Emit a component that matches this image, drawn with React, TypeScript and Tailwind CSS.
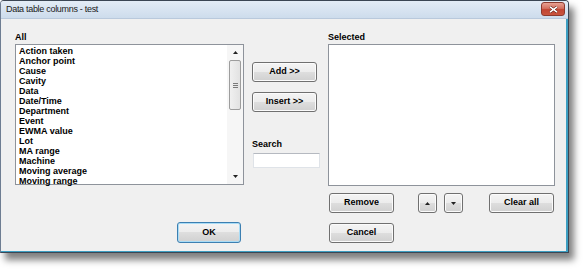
import React from "react"

const ITEMS = [
  "Action taken",
  "Anchor point",
  "Cause",
  "Cavity",
  "Data",
  "Date/Time",
  "Department",
  "Event",
  "EWMA value",
  "Lot",
  "MA range",
  "Machine",
  "Moving average",
  "Moving range",
]

const BTN =
  "flex items-center justify-center rounded-[3px] border text-[9px] font-bold text-black bg-[linear-gradient(#f4f4f4_0%,#ececec_50%,#dedede_50%,#d0d0d0_100%)]"

function Button({ children, className = "" }: { children: React.ReactNode; className?: string }) {
  return (
    <button className={`${BTN} border-[#707070] shadow-[inset_0_0_0_1px_#fbfbfb] ${className}`}>
      {children}
    </button>
  )
}

function Tri({ up }: { up?: boolean }) {
  return (
    <svg width="5" height="3" viewBox="0 0 5 3">
      <path d={up ? "M0 3L2.5 0L5 3Z" : "M0 0L5 0L2.5 3Z"} fill="#222" />
    </svg>
  )
}

export default function App() {
  return (
    <div className="w-[584px] h-[270px] bg-white font-['Liberation_Sans',Arial,sans-serif]">
      <div className="w-[569px] h-[253px] flex flex-col border border-[#3b4654] border-l-[#6e7d92] rounded-t-[4px] shadow-[5px_7px_7px_rgba(0,0,0,0.5)] overflow-hidden">
        {/* Title bar */}
        <div className="h-[18px] shrink-0 flex items-center justify-between pl-[5px] pr-[3px] bg-[linear-gradient(#e3ecf6,#cddcec)] border-b border-[#b9c9dc]">
          <span className="text-[9px] tracking-[-0.3px] text-[#1a1a1a] leading-none">Data table columns - test</span>
          <div className="w-[24px] h-[14px] -mt-[1px] rounded-[3px] border border-[#8c3a2e] bg-[linear-gradient(#e8a193_0%,#d4705f_45%,#c24532_55%,#c9553f_100%)] flex items-center justify-center">
            <svg width="9" height="7" viewBox="0 0 9 7">
              <path d="M1 0.8L8 6.2M8 0.8L1 6.2" stroke="#5a1e16" strokeWidth="2.6" />
              <path d="M1 0.8L8 6.2M8 0.8L1 6.2" stroke="#fff" strokeWidth="1.5" />
            </svg>
          </div>
        </div>

        {/* Client area */}
        <div className="flex-1 flex bg-[#f0f0f0] pt-[12px] pl-[14px] border-r-2 border-b border-r-[#3d9fc2] border-b-[#3d9fc2]">
          {/* Left column */}
          <div className="w-[229px] flex flex-col">
            <div className="h-[13px] text-[9px] font-bold leading-[13px] text-black">All</div>
            <div className="h-[141px] flex border border-[#8e939b] bg-white">
              <div className="flex-1 pl-[3px] pt-[1px]">
                {ITEMS.map((it) => (
                  <div key={it} className="h-[10px] text-[9px] font-bold leading-[10px] text-black whitespace-nowrap">
                    {it}
                  </div>
                ))}
              </div>
              <div className="w-[16px] flex flex-col bg-[#f6f6f6]">
                <div className="h-[15px] flex items-center justify-center">
                  <Tri up />
                </div>
                <div className="mx-[2px] h-[50px] rounded-[2px] border border-[#9d9d9d] bg-[linear-gradient(90deg,#f0f0f0,#e2e2e2)] flex flex-col items-center justify-center gap-[1px]">
                  <div className="w-[5px] h-px bg-[#7a7a7a]" />
                  <div className="w-[5px] h-px bg-[#7a7a7a]" />
                  <div className="w-[5px] h-px bg-[#7a7a7a]" />
                </div>
                <div className="flex-1" />
                <div className="h-[15px] flex items-center justify-center">
                  <Tri />
                </div>
              </div>
            </div>
            <button
              className={`${BTN} ml-[162px] mt-[37px] w-[64px] h-[21px] border-[#3c7fb1] shadow-[inset_0_0_0_1px_#a9dcf6]`}
            >
              OK
            </button>
          </div>

          {/* Middle column */}
          <div className="ml-[8px] w-[68px] flex flex-col">
            <Button className="mt-[31px] w-[65px] h-[20px]">Add &gt;&gt;</Button>
            <Button className="mt-[10px] w-[65px] h-[20px]">Insert &gt;&gt;</Button>
            <div className="mt-[26px] h-[13px] text-[9px] font-bold leading-[13px] text-black">Search</div>
            <div className="mt-[2px] ml-[1px] w-[67px] h-[15px] bg-white border border-[#dfe3e8] border-t-[#b5b9c0]" />
          </div>

          {/* Right column */}
          <div className="ml-[8px] w-[227px] flex flex-col">
            <div className="h-[13px] text-[9px] font-bold leading-[13px] text-black">Selected</div>
            <div className="h-[142px] border border-[#8e939b] bg-white" />
            <div className="mt-[7px] flex">
              <Button className="ml-[1px] w-[65px] h-[20px]">Remove</Button>
              <Button className="ml-[24px] w-[19px] h-[20px]">
                <Tri up />
              </Button>
              <Button className="ml-[7px] w-[19px] h-[20px]">
                <Tri />
              </Button>
              <Button className="ml-[26px] w-[65px] h-[20px]">Clear all</Button>
            </div>
            <Button className="mt-[10px] ml-[1px] w-[65px] h-[20px]">Cancel</Button>
          </div>
        </div>
      </div>
    </div>
  )
}
